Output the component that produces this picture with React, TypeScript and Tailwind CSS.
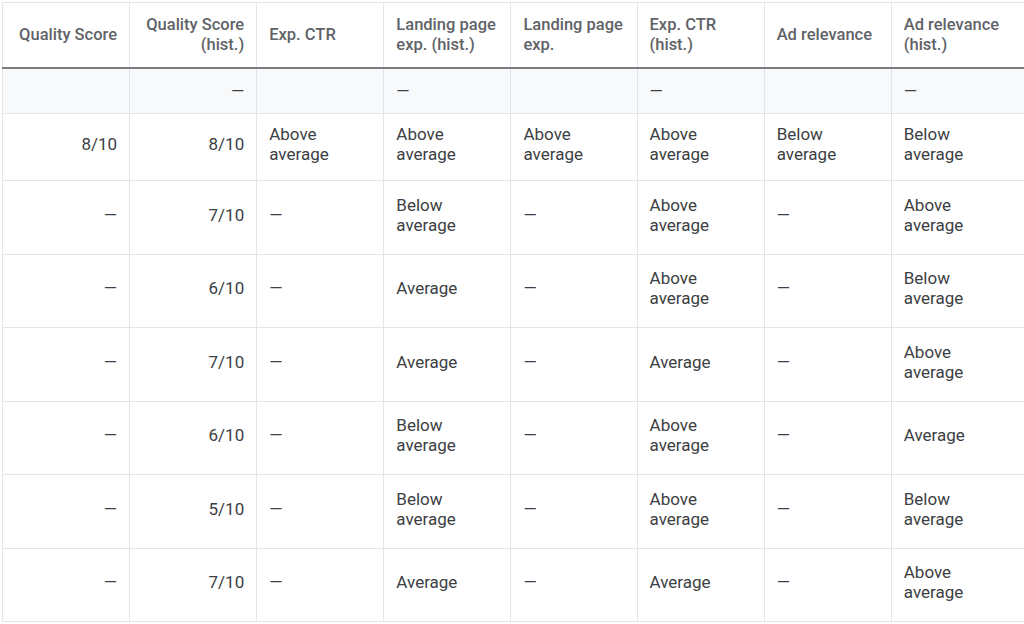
const headers = [
  { label: ['Quality Score'], right: true },
  { label: ['Quality Score', '(hist.)'], right: true },
  { label: ['Exp. CTR'] },
  { label: ['Landing page', 'exp. (hist.)'] },
  { label: ['Landing page', 'exp.'] },
  { label: ['Exp. CTR', '(hist.)'] },
  { label: ['Ad relevance'] },
  { label: ['Ad relevance', '(hist.)'] }
]

const colWidths = ['w-[127px]', 'w-[127px]', 'w-[127px]', 'w-[127px]', 'w-[126px]', 'w-[127px]', 'w-[127px]', 'w-[149px]']

const D = '—'

const totalRow = ['', D, '', D, '', D, '', D]

const rows: { h: string; cells: string[] }[] = [
  { h: 'h-[67px]', cells: ['8/10', '8/10', 'Above average', 'Above average', 'Above average', 'Above average', 'Below average', 'Below average'] },
  { h: 'h-[74px]', cells: [D, '7/10', D, 'Below average', D, 'Above average', D, 'Above average'] },
  { h: 'h-[73px]', cells: [D, '6/10', D, 'Average', D, 'Above average', D, 'Below average'] },
  { h: 'h-[74px]', cells: [D, '7/10', D, 'Average', D, 'Average', D, 'Above average'] },
  { h: 'h-[73px]', cells: [D, '6/10', D, 'Below average', D, 'Above average', D, 'Average'] },
  { h: 'h-[74px]', cells: [D, '5/10', D, 'Below average', D, 'Above average', D, 'Below average'] },
  { h: 'h-[73px]', cells: [D, '7/10', D, 'Average', D, 'Average', D, 'Above average'] }
]

function Cell({ text, right, raised }: { text: string; right?: boolean; raised?: boolean }) {
  const words = text.split(' ')
  const twoLine = words.length === 2 && words[1] === 'average'
  return (
    <td
      className={`border border-[#e3e5e8] px-3 align-middle ${raised ? 'pb-[6px]' : ''} ${right ? 'text-right' : 'text-left'}`}
    >
      {twoLine ? (
        <div className="leading-5">
          <div>{words[0]}</div>
          <div>{words[1]}</div>
        </div>
      ) : (
        <div className="leading-5">{text}</div>
      )}
    </td>
  )
}

export default function App() {
  return (
    <div
      className="h-[624px] w-[1024px] overflow-hidden bg-white pl-[2px] pt-[2px] text-[17px] text-[#3c4043]"
      style={{ fontFamily: 'Roboto, "Liberation Sans", sans-serif' }}
    >
      <table className="w-[1039px] table-fixed border-collapse">
        <colgroup>
          {colWidths.map((w, i) => (
            <col key={i} className={w} />
          ))}
        </colgroup>
        <thead>
          <tr className="h-[65px]">
            {headers.map((col, i) => (
              <th
                key={i}
                className={`border border-[#e3e5e8] border-b-2 border-b-[#7a7d80] px-3 align-middle text-[16.5px] font-medium text-[#5f6368] ${col.right ? 'text-right' : 'text-left'}`}
              >
                <div className="leading-5">
                  {col.label.map((line) => (
                    <div key={line}>{line}</div>
                  ))}
                </div>
              </th>
            ))}
          </tr>
        </thead>
        <tbody>
          <tr className="h-[46px] bg-[#f8f9fa]">
            {totalRow.map((text, i) => (
              <Cell key={i} text={text} right={i < 2} />
            ))}
          </tr>
          {rows.map((row, r) => (
            <tr key={r} className={row.h}>
              {row.cells.map((text, i) => (
                <Cell key={i} text={text} right={i < 2} raised />
              ))}
            </tr>
          ))}
        </tbody>
      </table>
    </div>
  )
}
